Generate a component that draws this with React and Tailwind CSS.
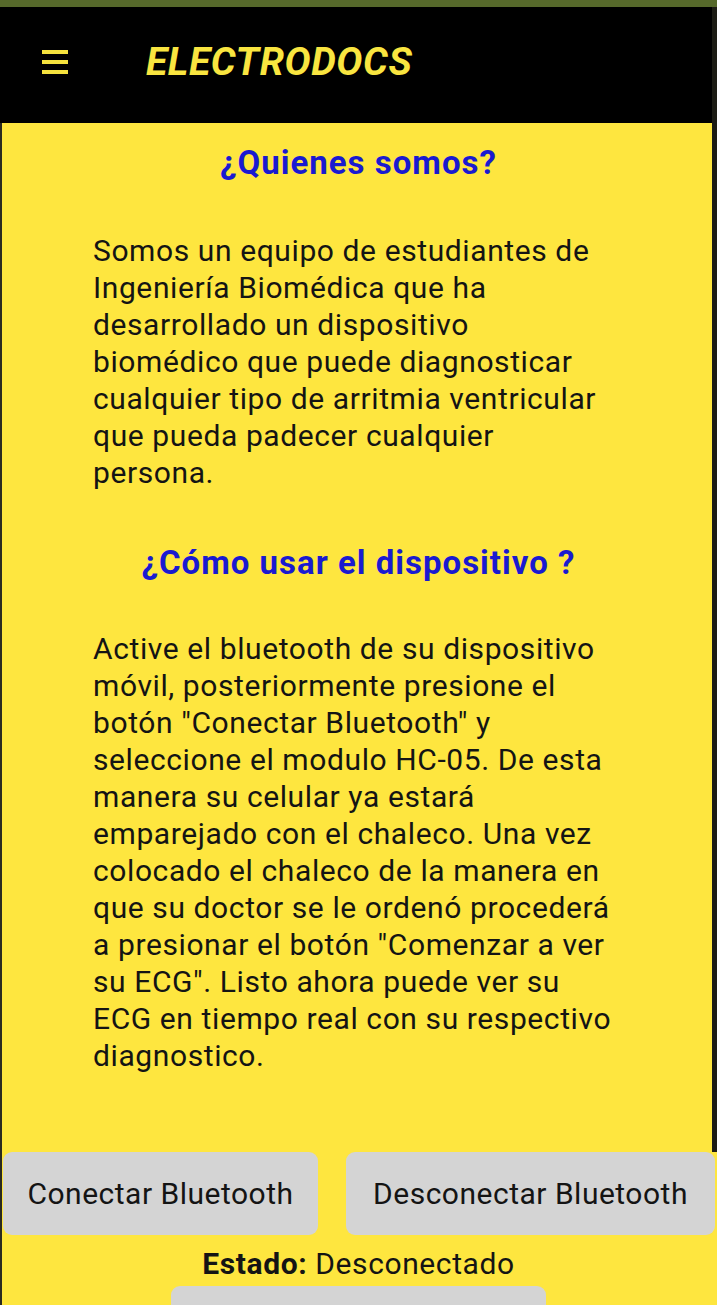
import React from 'react';

const font = { fontFamily: 'Roboto, "Noto Sans", sans-serif' };

const App = () => {
  return (
    <div className="relative w-[717px] h-[1305px] overflow-hidden bg-[#fee63f]" style={font}>
      {/* status strip */}
      <div className="h-[7px] bg-[#56692b]" />

      {/* Header */}
      <header className="h-[116px] bg-black flex items-center pl-[42px]">
        <div className="flex flex-col gap-[6px] w-[26px] mb-[6px]">
          <span className="block h-[4px] bg-[#f5e23e]" />
          <span className="block h-[4px] bg-[#f5e23e]" />
          <span className="block h-[4px] bg-[#f5e23e]" />
        </div>
        <h1 className="ml-[78px] mb-[6px] text-[39px] font-bold italic tracking-[0.6px] text-[#f9e540]">ELECTRODOCS</h1>
      </header>

      {/* Content */}
      <main className="flex flex-col">
        <h2 className="mt-[20px] text-center text-[33px] leading-[40px] font-bold tracking-[1px] text-[#1a1ad0]">¿Quienes somos?</h2>
        <p className="mt-[49px] ml-[93px] w-[523px] text-[30px] leading-[37px] tracking-[0.6px] text-[#141414]">
          Somos un equipo de estudiantes de Ingeniería Biomédica que ha desarrollado un dispositivo biomédico que puede diagnosticar cualquier tipo de arritmia ventricular que pueda padecer cualquier persona.
        </p>
        <h2 className="mt-[52px] text-center text-[33px] leading-[40px] font-bold tracking-[1px] text-[#1a1ad0]">¿Cómo usar el dispositivo ?</h2>
        <p className="mt-[47px] ml-[93px] w-[523px] text-[30px] leading-[37px] tracking-[0.6px] text-[#141414]">
          Active el bluetooth de su dispositivo móvil, posteriormente presione el botón "Conectar Bluetooth" y seleccione el modulo HC-05. De esta manera su celular ya estará emparejado con el chaleco. Una vez colocado el chaleco de la manera en que su doctor se le ordenó procederá a presionar el botón "Comenzar a ver su ECG". Listo ahora puede ver su ECG en tiempo real con su respectivo diagnostico.
        </p>

        <div className="mt-[78px] flex pl-[3px] pr-[2px] gap-[28px]">
          <button className="w-[315px] h-[83px] rounded-[9px] bg-[#d4d4d4] text-[30px] tracking-[0.5px] text-[#141414]">Conectar Bluetooth</button>
          <button className="flex-1 h-[83px] rounded-[9px] bg-[#d4d4d4] text-[30px] tracking-[0.5px] text-[#141414]">Desconectar Bluetooth</button>
        </div>

        <p className="mt-[10px] text-center text-[30px] leading-[37px] tracking-[0.6px] text-[#141414]">
          <span className="font-bold">Estado:</span> Desconectado
        </p>
        <div className="mt-[4px] mx-auto w-[375px] h-[60px] rounded-[9px] bg-[#d4d4d4]" />
      </main>

      {/* scrollbar / edges */}
      <div className="absolute left-0 top-[123px] w-[2px] h-[1182px] bg-[#2a2a20]" />
      <div className="absolute right-0 top-[7px] w-[5px] h-[1145px] bg-[#1c1c14]" />
    </div>
  );
};

export default App;
